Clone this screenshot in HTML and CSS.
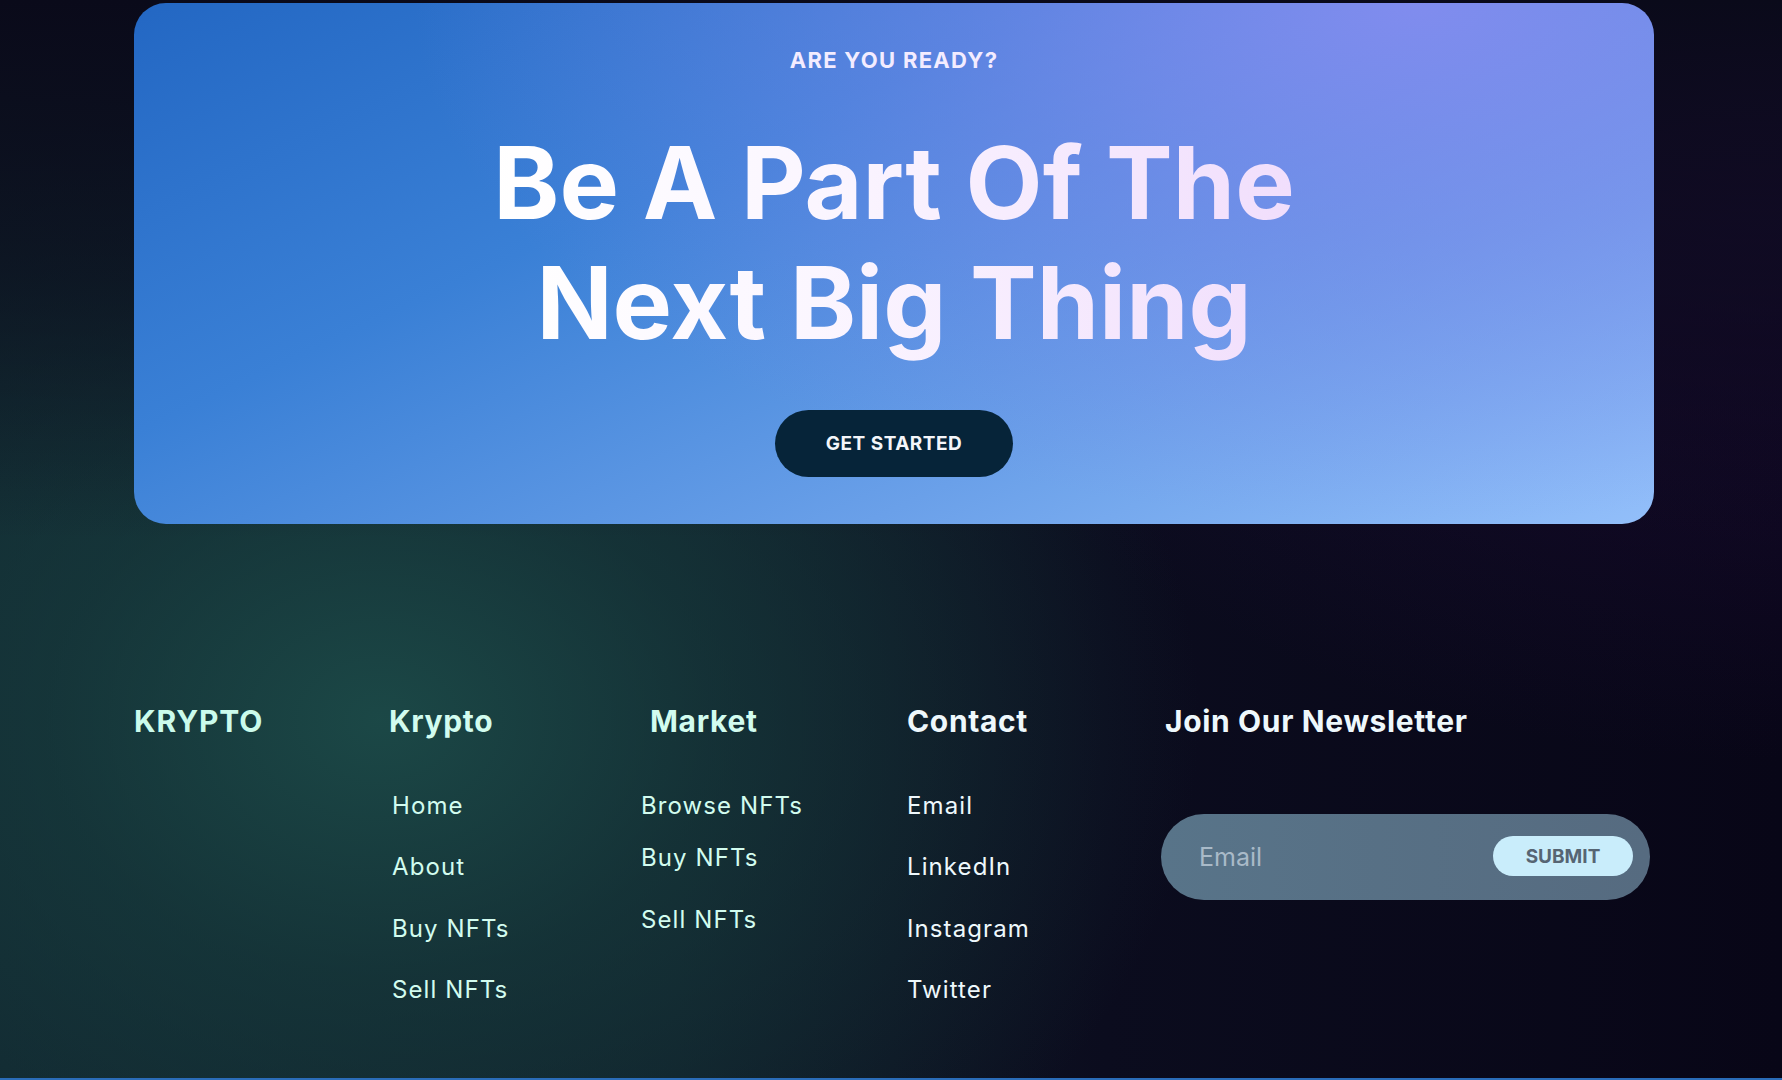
FILE: index.html
```html
<!DOCTYPE html>
<html lang="en">
<head>
<meta charset="utf-8">
<title>Krypto</title>
<link rel="stylesheet" href="styles.css">
</head>
<body>
<div class="page">
  <section class="cta">
    <p class="cta-label">ARE YOU READY?</p>
    <h1 class="cta-title">Be A Part Of The<br>Next Big Thing</h1>
    <a class="cta-btn" href="#">GET STARTED</a>
  </section>

  <footer class="footer">
    <div class="col">
      <h2 class="brand">KRYPTO</h2>
    </div>
    <div class="col col-krypto">
      <h3 class="col-title mint">Krypto</h3>
      <ul class="links mint">
        <li>Home</li>
        <li>About</li>
        <li>Buy NFTs</li>
        <li>Sell NFTs</li>
      </ul>
    </div>
    <div class="col col-market">
      <h3 class="col-title mint">Market</h3>
      <ul class="links mint">
        <li>Browse NFTs</li>
        <li>Buy NFTs</li>
        <li>Sell NFTs</li>
      </ul>
    </div>
    <div class="col">
      <h3 class="col-title light">Contact</h3>
      <ul class="links light">
        <li>Email</li>
        <li>LinkedIn</li>
        <li>Instagram</li>
        <li>Twitter</li>
      </ul>
    </div>
    <div class="col col-news">
      <h3 class="col-title light">Join Our Newsletter</h3>
      <form class="news-form">
        <input class="news-input" type="text" placeholder="Email">
        <button class="news-btn" type="button">SUBMIT</button>
      </form>
    </div>
  </footer>
</div>
<div class="bottom-line"></div>
</body>
</html>
```

FILE: styles.css
```css
* { box-sizing: border-box; }

html, body {
  margin: 0;
  padding: 0;
}

body {
  width: 1782px;
  height: 1080px;
  overflow: hidden;
  font-family: Inter, "Noto Sans", sans-serif;
  background-color: #0a0a1c;
  background-image:
    linear-gradient(180deg, rgba(10, 10, 26, 1) 0%, rgba(10, 10, 26, 0.6) 25%, rgba(10, 10, 26, 0) 50%),
    radial-gradient(ellipse 820px 640px at 380px 720px, rgba(28, 74, 72, 0.95) 0%, rgba(24, 64, 64, 0.6) 40%, rgba(24, 64, 64, 0) 100%),
    radial-gradient(ellipse 1000px 760px at 1782px 0px, rgba(40, 16, 70, 1) 0%, rgba(30, 12, 56, 0.55) 45%, rgba(30, 12, 56, 0) 100%),
    linear-gradient(90deg, #11252f 0%, #0f1c28 38%, #0b0c1e 62%, #080617 100%);
  display: flex;
  flex-direction: column;
}

.page {
  flex: 1;
  padding: 3px 0 0 134px;
}

/* CTA card */
.cta {
  width: 1520px;
  height: 521px;
  border-radius: 32px;
  padding-top: 44px;
  display: flex;
  flex-direction: column;
  align-items: center;
  background:
    radial-gradient(ellipse 1000px 520px at 1280px 0px, rgba(134, 140, 240, 0.9) 0%, rgba(128, 136, 236, 0.5) 45%, rgba(128, 136, 236, 0) 100%),
    linear-gradient(155deg, #2367c3 0%, #3a80d6 35%, #6aa0e9 70%, #93bffa 100%);
}

.cta-label {
  margin: 0;
  font-size: 22px;
  font-weight: 700;
  letter-spacing: 1.3px;
  color: #f3ecff;
  line-height: normal;
}

.cta-title {
  margin: 50px 0 0;
  font-size: 100px;
  line-height: 120px;
  font-weight: 700;
  text-align: center;
  letter-spacing: 0;
  background: linear-gradient(90deg, #ffffff 0%, #fbf6ff 40%, #f1defc 100%);
  -webkit-background-clip: text;
  background-clip: text;
  color: transparent;
}

.cta-btn {
  margin-top: 47px;
  width: 238px;
  height: 67px;
  border-radius: 34px;
  background: #062439;
  color: #f4f6fa;
  font-size: 19px;
  font-weight: 700;
  letter-spacing: 0.5px;
  text-decoration: none;
  display: flex;
  align-items: center;
  justify-content: center;
}

/* Footer */
.footer {
  margin-top: 179px;
  display: grid;
  grid-template-columns: 255px 252px 266px 257px 1fr;
}

.brand {
  margin: 0;
  font-size: 30px;
  font-weight: 700;
  letter-spacing: 0.9px;
  color: #cbfbec;
  line-height: normal;
}

.col-title {
  margin: 0;
  font-size: 30px;
  font-weight: 700;
  letter-spacing: 0.65px;
  line-height: normal;
}

.mint { color: #d2fcef; }
.light { color: #eef8fc; }

.links {
  list-style: none;
  margin: 53px 0 0;
  padding: 0;
  display: flex;
  flex-direction: column;
  gap: 32.6px;
  font-size: 24px;
  line-height: 28.8px;
  font-weight: 400;
  letter-spacing: 1.1px;
}

.col-krypto .links { padding-left: 3px; }
.col-market .col-title { padding-left: 9px; }
.col-market .links li:first-child { margin-bottom: -9px; }

.col-news .col-title { padding-left: 1px; }

.news-form {
  margin: 75px 0 0 -3px;
  width: 489px;
  height: 86px;
  border-radius: 43px;
  background: linear-gradient(90deg, #587489 0%, #566b80 100%);
  display: flex;
  align-items: center;
  padding: 0 17px 0 38px;
}

.news-input {
  flex: 1;
  min-width: 0;
  border: none;
  outline: none;
  background: transparent;
  font-family: Inter, "Noto Sans", sans-serif;
  font-size: 25px;
  color: #e4eef5;
  padding: 0;
}

.news-input::placeholder { color: #a9bac8; }

.news-btn {
  width: 140px;
  height: 40px;
  border: none;
  border-radius: 20px;
  background: #c9edfb;
  color: #566573;
  font-family: Inter, "Noto Sans", sans-serif;
  font-size: 19px;
  font-weight: 700;
  margin-top: -2px;
}

.bottom-line {
  height: 2px;
  background: #2a6cb8;
}
```
